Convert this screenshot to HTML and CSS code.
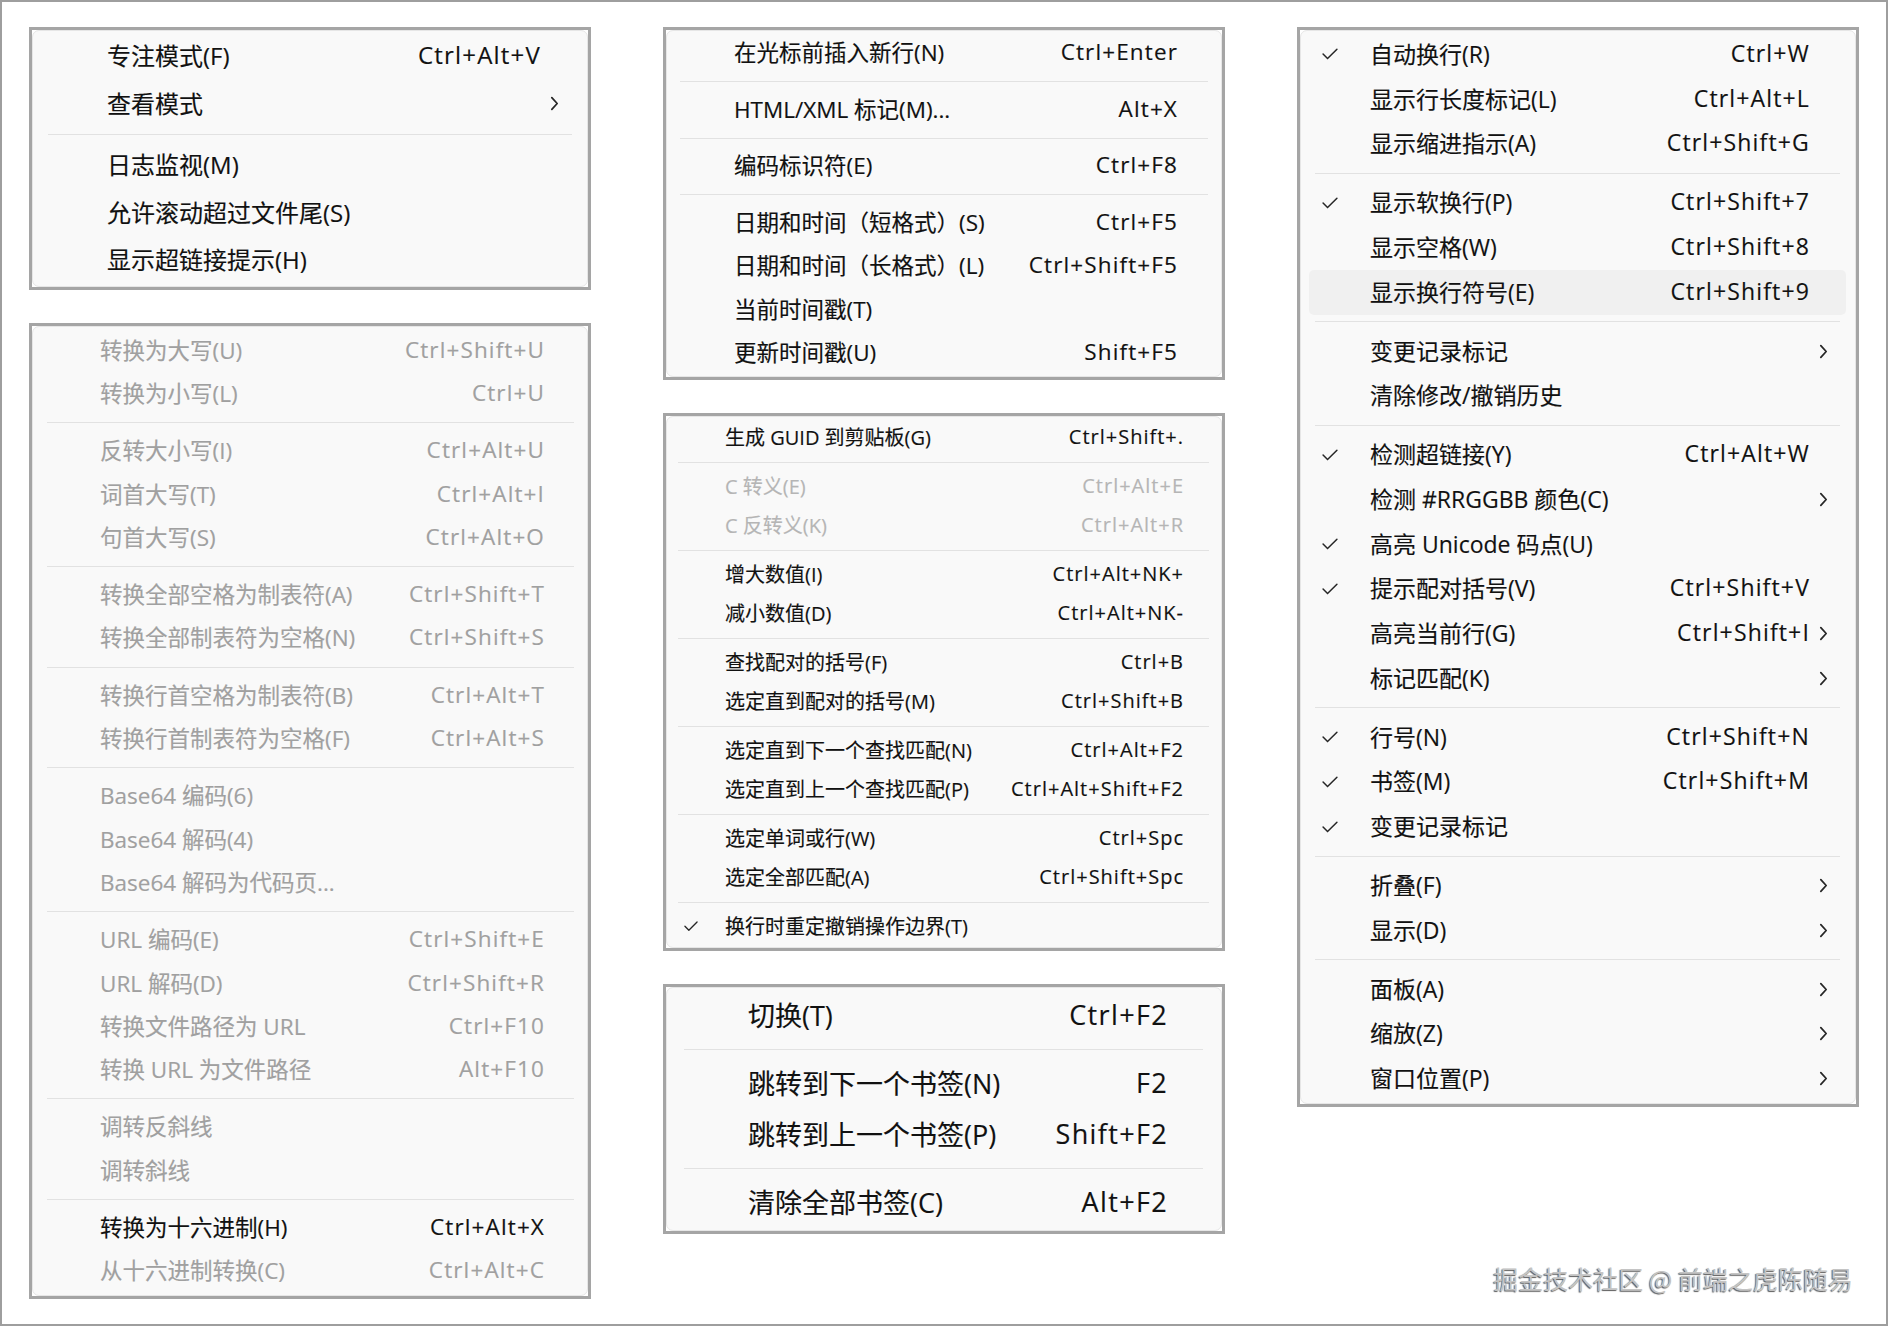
FILE: index.html
```html
<!DOCTYPE html>
<html lang="zh-CN">
<head>
<meta charset="utf-8">
<title>菜单</title>
<link rel="stylesheet" href="styles.css">
</head>
<body>
<div class="page">
  <div class="col">
    <div class="frame"><div class="menu p1">
      <div class="row"><span class="check"></span><span class="label">专注模式(F)</span><span class="key">Ctrl+Alt+V</span><span class="arrow"></span></div>
      <div class="row"><span class="check"></span><span class="label">查看模式</span><span class="key"></span><span class="arrow"><svg class="chev" viewBox="0 0 8 14"><path d="M1.5 1.5 L6.5 7 L1.5 12.5"/></svg></span></div>
      <div class="sep"></div>
      <div class="row"><span class="check"></span><span class="label">日志监视(M)</span><span class="key"></span><span class="arrow"></span></div>
      <div class="row"><span class="check"></span><span class="label">允许滚动超过文件尾(S)</span><span class="key"></span><span class="arrow"></span></div>
      <div class="row"><span class="check"></span><span class="label">显示超链接提示(H)</span><span class="key"></span><span class="arrow"></span></div>
    </div></div>
    <div class="frame"><div class="menu p2">
      <div class="row off"><span class="check"></span><span class="label">转换为大写(U)</span><span class="key">Ctrl+Shift+U</span><span class="arrow"></span></div>
      <div class="row off"><span class="check"></span><span class="label">转换为小写(L)</span><span class="key">Ctrl+U</span><span class="arrow"></span></div>
      <div class="sep"></div>
      <div class="row off"><span class="check"></span><span class="label">反转大小写(I)</span><span class="key">Ctrl+Alt+U</span><span class="arrow"></span></div>
      <div class="row off"><span class="check"></span><span class="label">词首大写(T)</span><span class="key">Ctrl+Alt+I</span><span class="arrow"></span></div>
      <div class="row off"><span class="check"></span><span class="label">句首大写(S)</span><span class="key">Ctrl+Alt+O</span><span class="arrow"></span></div>
      <div class="sep"></div>
      <div class="row off"><span class="check"></span><span class="label">转换全部空格为制表符(A)</span><span class="key">Ctrl+Shift+T</span><span class="arrow"></span></div>
      <div class="row off"><span class="check"></span><span class="label">转换全部制表符为空格(N)</span><span class="key">Ctrl+Shift+S</span><span class="arrow"></span></div>
      <div class="sep"></div>
      <div class="row off"><span class="check"></span><span class="label">转换行首空格为制表符(B)</span><span class="key">Ctrl+Alt+T</span><span class="arrow"></span></div>
      <div class="row off"><span class="check"></span><span class="label">转换行首制表符为空格(F)</span><span class="key">Ctrl+Alt+S</span><span class="arrow"></span></div>
      <div class="sep"></div>
      <div class="row off"><span class="check"></span><span class="label">Base64 编码(6)</span><span class="key"></span><span class="arrow"></span></div>
      <div class="row off"><span class="check"></span><span class="label">Base64 解码(4)</span><span class="key"></span><span class="arrow"></span></div>
      <div class="row off"><span class="check"></span><span class="label">Base64 解码为代码页...</span><span class="key"></span><span class="arrow"></span></div>
      <div class="sep"></div>
      <div class="row off"><span class="check"></span><span class="label">URL 编码(E)</span><span class="key">Ctrl+Shift+E</span><span class="arrow"></span></div>
      <div class="row off"><span class="check"></span><span class="label">URL 解码(D)</span><span class="key">Ctrl+Shift+R</span><span class="arrow"></span></div>
      <div class="row off"><span class="check"></span><span class="label">转换文件路径为 URL</span><span class="key">Ctrl+F10</span><span class="arrow"></span></div>
      <div class="row off"><span class="check"></span><span class="label">转换 URL 为文件路径</span><span class="key">Alt+F10</span><span class="arrow"></span></div>
      <div class="sep"></div>
      <div class="row off"><span class="check"></span><span class="label">调转反斜线</span><span class="key"></span><span class="arrow"></span></div>
      <div class="row off"><span class="check"></span><span class="label">调转斜线</span><span class="key"></span><span class="arrow"></span></div>
      <div class="sep"></div>
      <div class="row"><span class="check"></span><span class="label">转换为十六进制(H)</span><span class="key">Ctrl+Alt+X</span><span class="arrow"></span></div>
      <div class="row off"><span class="check"></span><span class="label">从十六进制转换(C)</span><span class="key">Ctrl+Alt+C</span><span class="arrow"></span></div>
    </div></div>
  </div>

  <div class="col">
    <div class="frame"><div class="menu p3">
      <div class="row"><span class="check"></span><span class="label">在光标前插入新行(N)</span><span class="key">Ctrl+Enter</span><span class="arrow"></span></div>
      <div class="sep"></div>
      <div class="row"><span class="check"></span><span class="label">HTML/XML 标记(M)...</span><span class="key">Alt+X</span><span class="arrow"></span></div>
      <div class="sep"></div>
      <div class="row"><span class="check"></span><span class="label">编码标识符(E)</span><span class="key">Ctrl+F8</span><span class="arrow"></span></div>
      <div class="sep"></div>
      <div class="row"><span class="check"></span><span class="label">日期和时间（短格式）(S)</span><span class="key">Ctrl+F5</span><span class="arrow"></span></div>
      <div class="row"><span class="check"></span><span class="label">日期和时间（长格式）(L)</span><span class="key">Ctrl+Shift+F5</span><span class="arrow"></span></div>
      <div class="row"><span class="check"></span><span class="label">当前时间戳(T)</span><span class="key"></span><span class="arrow"></span></div>
      <div class="row"><span class="check"></span><span class="label">更新时间戳(U)</span><span class="key">Shift+F5</span><span class="arrow"></span></div>
    </div></div>
    <div class="frame"><div class="menu p4">
      <div class="row"><span class="check"></span><span class="label">生成 GUID 到剪贴板(G)</span><span class="key">Ctrl+Shift+.</span><span class="arrow"></span></div>
      <div class="sep"></div>
      <div class="row off2"><span class="check"></span><span class="label">C 转义(E)</span><span class="key">Ctrl+Alt+E</span><span class="arrow"></span></div>
      <div class="row off2"><span class="check"></span><span class="label">C 反转义(K)</span><span class="key">Ctrl+Alt+R</span><span class="arrow"></span></div>
      <div class="sep"></div>
      <div class="row"><span class="check"></span><span class="label">增大数值(I)</span><span class="key">Ctrl+Alt+NK+</span><span class="arrow"></span></div>
      <div class="row"><span class="check"></span><span class="label">减小数值(D)</span><span class="key">Ctrl+Alt+NK-</span><span class="arrow"></span></div>
      <div class="sep"></div>
      <div class="row"><span class="check"></span><span class="label">查找配对的括号(F)</span><span class="key">Ctrl+B</span><span class="arrow"></span></div>
      <div class="row"><span class="check"></span><span class="label">选定直到配对的括号(M)</span><span class="key">Ctrl+Shift+B</span><span class="arrow"></span></div>
      <div class="sep"></div>
      <div class="row"><span class="check"></span><span class="label">选定直到下一个查找匹配(N)</span><span class="key">Ctrl+Alt+F2</span><span class="arrow"></span></div>
      <div class="row"><span class="check"></span><span class="label">选定直到上一个查找匹配(P)</span><span class="key">Ctrl+Alt+Shift+F2</span><span class="arrow"></span></div>
      <div class="sep"></div>
      <div class="row"><span class="check"></span><span class="label">选定单词或行(W)</span><span class="key">Ctrl+Spc</span><span class="arrow"></span></div>
      <div class="row"><span class="check"></span><span class="label">选定全部匹配(A)</span><span class="key">Ctrl+Shift+Spc</span><span class="arrow"></span></div>
      <div class="sep"></div>
      <div class="row"><span class="check"><svg class="tick" viewBox="0 0 15 11"><path d="M1 5.5 L5.2 9.8 L14 1"/></svg></span><span class="label">换行时重定撤销操作边界(T)</span><span class="key"></span><span class="arrow"></span></div>
    </div></div>
    <div class="frame"><div class="menu p5">
      <div class="row"><span class="check"></span><span class="label">切换(T)</span><span class="key">Ctrl+F2</span><span class="arrow"></span></div>
      <div class="sep"></div>
      <div class="row"><span class="check"></span><span class="label">跳转到下一个书签(N)</span><span class="key">F2</span><span class="arrow"></span></div>
      <div class="row"><span class="check"></span><span class="label">跳转到上一个书签(P)</span><span class="key">Shift+F2</span><span class="arrow"></span></div>
      <div class="sep"></div>
      <div class="row"><span class="check"></span><span class="label">清除全部书签(C)</span><span class="key">Alt+F2</span><span class="arrow"></span></div>
    </div></div>
  </div>

  <div class="col">
    <div class="frame"><div class="menu p6">
      <div class="row"><span class="check"><svg class="tick" viewBox="0 0 15 11"><path d="M1 5.5 L5.2 9.8 L14 1"/></svg></span><span class="label">自动换行(R)</span><span class="key">Ctrl+W</span><span class="arrow"></span></div>
      <div class="row"><span class="check"></span><span class="label">显示行长度标记(L)</span><span class="key">Ctrl+Alt+L</span><span class="arrow"></span></div>
      <div class="row"><span class="check"></span><span class="label">显示缩进指示(A)</span><span class="key">Ctrl+Shift+G</span><span class="arrow"></span></div>
      <div class="sep"></div>
      <div class="row"><span class="check"><svg class="tick" viewBox="0 0 15 11"><path d="M1 5.5 L5.2 9.8 L14 1"/></svg></span><span class="label">显示软换行(P)</span><span class="key">Ctrl+Shift+7</span><span class="arrow"></span></div>
      <div class="row"><span class="check"></span><span class="label">显示空格(W)</span><span class="key">Ctrl+Shift+8</span><span class="arrow"></span></div>
      <div class="row hover"><span class="check"></span><span class="label">显示换行符号(E)</span><span class="key">Ctrl+Shift+9</span><span class="arrow"></span></div>
      <div class="sep"></div>
      <div class="row"><span class="check"></span><span class="label">变更记录标记</span><span class="key"></span><span class="arrow"><svg class="chev" viewBox="0 0 8 14"><path d="M1.5 1.5 L6.5 7 L1.5 12.5"/></svg></span></div>
      <div class="row"><span class="check"></span><span class="label">清除修改/撤销历史</span><span class="key"></span><span class="arrow"></span></div>
      <div class="sep"></div>
      <div class="row"><span class="check"><svg class="tick" viewBox="0 0 15 11"><path d="M1 5.5 L5.2 9.8 L14 1"/></svg></span><span class="label">检测超链接(Y)</span><span class="key">Ctrl+Alt+W</span><span class="arrow"></span></div>
      <div class="row"><span class="check"></span><span class="label">检测 #RRGGBB 颜色(C)</span><span class="key"></span><span class="arrow"><svg class="chev" viewBox="0 0 8 14"><path d="M1.5 1.5 L6.5 7 L1.5 12.5"/></svg></span></div>
      <div class="row"><span class="check"><svg class="tick" viewBox="0 0 15 11"><path d="M1 5.5 L5.2 9.8 L14 1"/></svg></span><span class="label">高亮 Unicode 码点(U)</span><span class="key"></span><span class="arrow"></span></div>
      <div class="row"><span class="check"><svg class="tick" viewBox="0 0 15 11"><path d="M1 5.5 L5.2 9.8 L14 1"/></svg></span><span class="label">提示配对括号(V)</span><span class="key">Ctrl+Shift+V</span><span class="arrow"></span></div>
      <div class="row"><span class="check"></span><span class="label">高亮当前行(G)</span><span class="key">Ctrl+Shift+I</span><span class="arrow"><svg class="chev" viewBox="0 0 8 14"><path d="M1.5 1.5 L6.5 7 L1.5 12.5"/></svg></span></div>
      <div class="row"><span class="check"></span><span class="label">标记匹配(K)</span><span class="key"></span><span class="arrow"><svg class="chev" viewBox="0 0 8 14"><path d="M1.5 1.5 L6.5 7 L1.5 12.5"/></svg></span></div>
      <div class="sep"></div>
      <div class="row"><span class="check"><svg class="tick" viewBox="0 0 15 11"><path d="M1 5.5 L5.2 9.8 L14 1"/></svg></span><span class="label">行号(N)</span><span class="key">Ctrl+Shift+N</span><span class="arrow"></span></div>
      <div class="row"><span class="check"><svg class="tick" viewBox="0 0 15 11"><path d="M1 5.5 L5.2 9.8 L14 1"/></svg></span><span class="label">书签(M)</span><span class="key">Ctrl+Shift+M</span><span class="arrow"></span></div>
      <div class="row"><span class="check"><svg class="tick" viewBox="0 0 15 11"><path d="M1 5.5 L5.2 9.8 L14 1"/></svg></span><span class="label">变更记录标记</span><span class="key"></span><span class="arrow"></span></div>
      <div class="sep"></div>
      <div class="row"><span class="check"></span><span class="label">折叠(F)</span><span class="key"></span><span class="arrow"><svg class="chev" viewBox="0 0 8 14"><path d="M1.5 1.5 L6.5 7 L1.5 12.5"/></svg></span></div>
      <div class="row"><span class="check"></span><span class="label">显示(D)</span><span class="key"></span><span class="arrow"><svg class="chev" viewBox="0 0 8 14"><path d="M1.5 1.5 L6.5 7 L1.5 12.5"/></svg></span></div>
      <div class="sep"></div>
      <div class="row"><span class="check"></span><span class="label">面板(A)</span><span class="key"></span><span class="arrow"><svg class="chev" viewBox="0 0 8 14"><path d="M1.5 1.5 L6.5 7 L1.5 12.5"/></svg></span></div>
      <div class="row"><span class="check"></span><span class="label">缩放(Z)</span><span class="key"></span><span class="arrow"><svg class="chev" viewBox="0 0 8 14"><path d="M1.5 1.5 L6.5 7 L1.5 12.5"/></svg></span></div>
      <div class="row"><span class="check"></span><span class="label">窗口位置(P)</span><span class="key"></span><span class="arrow"><svg class="chev" viewBox="0 0 8 14"><path d="M1.5 1.5 L6.5 7 L1.5 12.5"/></svg></span></div>
    </div></div>
    <div class="wm">掘金技术社区 @ 前端之虎陈随易</div>
  </div>
</div>
</body>
</html>
```

FILE: styles.css
```css
html, body {
  margin: 0;
  background: #ffffff;
}

.page {
  width: 1888px;
  height: 1326px;
  box-sizing: border-box;
  border: 2px solid #9e9e9e;
  background: #ffffff;
  padding: 24.5px 0 0 27px;
  display: flex;
  align-items: flex-start;
  gap: 72px;
  font-family: "Open Sans", "Noto Sans CJK SC", sans-serif;
  color: #111111;
}

.col {
  width: 562px;
  display: flex;
  flex-direction: column;
  gap: 33px;
}

.frame {
  border: 3px solid #a5a5a5;
  background: #ffffff;
}

.menu {
  background: #f9f9f9;
  border: 1px solid #e6e6e6;
  border-radius: 7px;
  padding: var(--pad) 0;
  --cx: 0px;
}

.row {
  display: flex;
  align-items: center;
  box-sizing: border-box;
  height: var(--rh);
  padding-right: var(--pr);
  padding-bottom: 3px;
  white-space: nowrap;
  -webkit-text-stroke: 0.15px currentColor;
}

.check {
  flex: none;
  width: var(--tx);
  box-sizing: border-box;
  padding-left: var(--cx);
  padding-top: 3px;
  display: flex;
  align-items: center;
}

.label {
  flex: 1;
}

.key {
  letter-spacing: 0.05em;
}

.arrow {
  flex: none;
  width: 18px;
  padding-top: 3px;
  display: flex;
  justify-content: flex-end;
  align-items: center;
}

.chev {
  width: 9px;
  height: 15px;
  fill: none;
  stroke: #262626;
  stroke-width: 1.6;
  stroke-linecap: round;
  stroke-linejoin: round;
}

.tick {
  width: 16px;
  height: 12px;
  fill: none;
  stroke: #262626;
  stroke-width: 1.4;
  stroke-linecap: round;
  stroke-linejoin: round;
}

.sep {
  height: 1px;
  background: #e2e2e2;
  margin: var(--sm) var(--sr) var(--sm) var(--sl);
}

.off {
  color: #a0a0a0;
}

.off2 {
  color: #b5b5b5;
}

.row.hover {
  background: #f0f0f0;
  border-radius: 5px;
  margin: 0 9px 0 8px;
  padding-right: calc(var(--pr) - 9px);
}

.row.hover .check {
  width: calc(var(--tx) - 8px);
}

.p1 {
  --pad: 2px; --rh: 47.5px; --tx: 74px; --pr: 28px;
  --sm: 6.5px; --sl: 15px; --sr: 15px;
  font-size: 24px;
}

.p2 {
  --pad: 2px; --rh: 43.3px; --tx: 67px; --pr: 24px;
  --sm: 6.5px; --sl: 14px; --sr: 13px;
  font-size: 22.5px;
}

.p3 {
  --pad: 1px; --rh: 43.5px; --tx: 67px; --pr: 25px;
  --sm: 6px; --sl: 13px; --sr: 13px;
  font-size: 22.5px;
}

.p4 {
  --pad: 1px; --rh: 39px; --tx: 58px; --cx: 17px; --pr: 19px;
  --sm: 4.5px; --sl: 11px; --sr: 12px;
  font-size: 20px;
}

.p4 .tick {
  width: 14px;
  height: 10.5px;
}

.p5 {
  --pad: 2px; --rh: 51px; --tx: 81px; --pr: 35px;
  --sm: 8px; --sl: 17px; --sr: 18px;
  font-size: 27px;
}

.p6 {
  --pad: 1.6px; --rh: 44.7px; --tx: 69px; --cx: 21px; --pr: 27px;
  --sm: 6.65px; --sl: 14px; --sr: 15px;
  font-size: 23px;
}

.wm {
  margin-top: 120px;
  padding-right: 6px;
  text-align: right;
  font-family: "Noto Sans CJK SC", sans-serif;
  font-size: 25px;
  line-height: 36px;
  color: #c4c4c4;
  text-shadow: -1px 1px 1px #5a5a5a;
}
```
